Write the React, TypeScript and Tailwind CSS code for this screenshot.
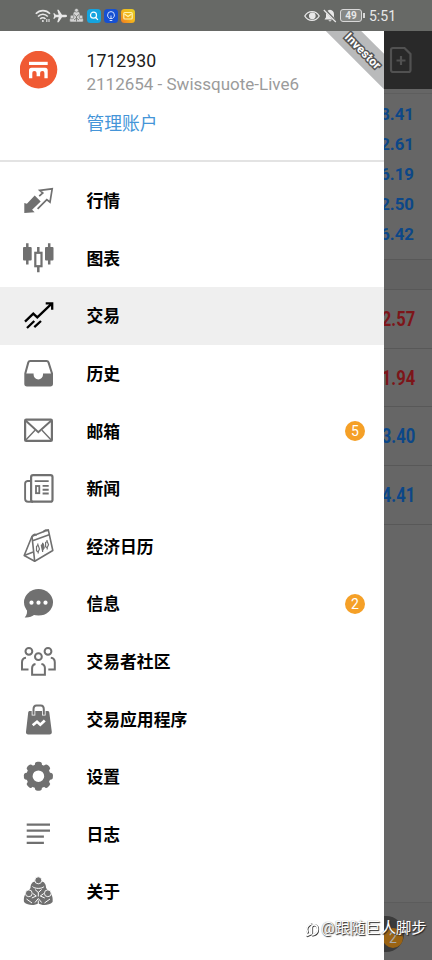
import type { ReactNode } from 'react';

interface MenuItem {
  label: string;
  icon: ReactNode;
  badge?: number;
  active?: boolean;
}

const GRAY = '#707070';

function Icon({ children, color = GRAY }: { children: ReactNode; color?: string }) {
  return (
    <svg width="36" height="36" viewBox="0 0 36 36" fill="none" stroke={color} strokeWidth="2" className="shrink-0 overflow-visible">
      {children}
    </svg>
  );
}

function CommunityLogo({ color }: { color: string }) {
  return (
    <>
      <g fill={color} stroke="none">
        <path d="M10.500 14c0-3.600 2-6.500 4.500-6.500h6.600c2.500 0 4.500 2.900 4.500 6.500l3 4c3 2 4 6 3.500 10-4 4-11 3.500-14.300 1.500C15 31.500 8 32 4 28c-.5-4 .5-8 3.500-10z" />
      </g>
      <g fill={color} stroke="#fff" strokeWidth="0.9">
        <circle cx="18.300" cy="6.300" r="3.500" />
        <circle cx="8.800" cy="19.300" r="3.400" />
        <circle cx="27.800" cy="19.300" r="3.400" />
      </g>
      <g stroke="#fff" strokeWidth="1">
        <path d="M12.500 12.500c2 2.500 9.600 2.500 11.600 0M15 15.500l3.300 3 3.300-3M18.300 18.500v4M12.800 19.500l3.500 2.500-4.500 2M23.800 19.500l-3.500 2.500 4.500 2M6.500 25l5.500 4M30 25l-5.500 4M15 28.500l3.300-4 3.300 4M18.300 26.500v5" />
      </g>
    </>
  );
}

const gearAngles = [0, 45, 90, 135, 180, 225, 270, 315];

const menu: MenuItem[] = [
  {
    label: '行情',
    icon: (
      <Icon>
        <path d="M4.300 19.900v10l10.400-.7-2.600-2.500 8.600-8.200-6-6-7.800 8.200z" fill={GRAY} stroke="none" />
        <path d="M17.600 25.800l9.200-9.200 3.200 2.600 2.200-13.400-12.400 1.600 3 2.600-3.600 3.200" strokeWidth="1.700" />
      </Icon>
    ),
  },
  {
    label: '图表',
    icon: (
      <Icon>
        <path d="M7.300 3.300v21.300M29.200 3.300v21.300M18.300 7v5M18.300 27v5.300" strokeWidth="2.500" />
        <rect x="3" y="6.900" width="8.700" height="13.600" rx="1" fill={GRAY} stroke="none" />
        <rect x="25" y="6.900" width="8.500" height="13.600" rx="1" fill={GRAY} stroke="none" />
        <rect x="15.300" y="12.800" width="6.200" height="13.400" strokeWidth="2.200" />
      </Icon>
    ),
  },
  {
    label: '交易',
    active: true,
    icon: (
      <Icon color="#000">
        <path d="M5 23.700l8.300-8 4 3.700L31.700 5.700M25.700 5.400h6.500v6.300M7 30l7.300-7M14.300 29.200l6.700-6.200" strokeWidth="2.300" />
      </Icon>
    ),
  },
  {
    label: '历史',
    icon: (
      <Icon>
        <path d="M10.200 5h16.400c1 0 1.600.5 1.900 1.400L32 17.500v10.300a1.700 1.700 0 0 1-1.700 1.700H7a1.700 1.700 0 0 1-1.700-1.700V17.500L8.300 6.400C8.600 5.500 9.200 5 10.200 5z" />
        <path d="M5 17.600h8.600v1.200a4.700 4.700 0 0 0 9.400 0v-1.200h9V29.500H5z" fill={GRAY} stroke="none" />
      </Icon>
    ),
  },
  {
    label: '邮箱',
    badge: 5,
    icon: (
      <Icon>
        <rect x="5.100" y="6.700" width="26.800" height="21.200" rx="1" strokeWidth="2.200" />
        <path d="M5.600 7.500l12.700 11.700L31.400 7.500" />
        <path d="M5.600 27.300l9.400-10M31.400 27.300l-9.400-10" strokeWidth="1.400" />
      </Icon>
    ),
  },
  {
    label: '新闻',
    icon: (
      <Icon>
        <rect x="11.100" y="4.100" width="21.400" height="26.600" rx="2" strokeWidth="2.200" />
        <path d="M11 10H7.500C6 10.200 5.100 11.200 5.100 12.700v15c0 2 1.200 3 3 3H13M14.700 10.100h14M22.600 14.900h6.100M22.600 18.700h6.100M22.600 22.500h6.100" strokeWidth="1.900" />
        <rect x="16" y="15" width="3.300" height="7.200" strokeWidth="1.800" />
      </Icon>
    ),
  },
  {
    label: '经济日历',
    icon: (
      <Icon>
        <g strokeWidth="1.600" strokeLinejoin="round">
          <path d="M12 8.300L28.300 1.800 32.800 22.500 14.700 33.300 4.200 27.500z" />
          <path d="M12 8.300l2.700 25M12.600 12.800l17.200-6.400M4.200 27.500l9-3.500" />
          <path d="M12.600 8.500c0-2 3.200-3.200 3.700-.8M23.600 4.200c0-2 3.200-3.200 3.700-.8" />
          <g strokeWidth="1.200">
            <path d="M16.500 18.500l1.600-1.400 1.400 4-1.400 2.900-1.600-1.200zM25.600 14.500l1.600-1 1.300 3.200-1.400 3-1.500-1zM17.800 15.500v1.800M18.200 23.500v2M27 12v1.600M27.200 19.400v2M22.600 14.800v9.200" />
            <path d="M21.300 17.200l2-1.200.9 4-1.800 2.300z" fill={GRAY} />
          </g>
        </g>
      </Icon>
    ),
  },
  {
    label: '信息',
    badge: 2,
    icon: (
      <Icon>
        <g fill={GRAY} stroke="none">
          <ellipse cx="18.500" cy="16.300" rx="14.500" ry="13.200" />
          <path d="M6.500 22c1.200 4 .5 7-1.800 9.500 4 .3 7.300-.7 10-3z" />
        </g>
        <g fill="#fff" stroke="none">
          <circle cx="11.500" cy="16.700" r="2.100" />
          <circle cx="18.500" cy="16.700" r="2.100" />
          <circle cx="25.500" cy="16.700" r="2.100" />
        </g>
      </Icon>
    ),
  },
  {
    label: '交易者社区',
    icon: (
      <Icon>
        <circle cx="8.900" cy="7.300" r="3.400" />
        <circle cx="28" cy="7.300" r="3.400" />
        <circle cx="18.400" cy="12.700" r="3.400" />
        <path d="M6 13.700c-2.600.3-4 1.900-4 4.600v7.300h6.500M30.800 13.700c2.600.3 4 1.900 4 4.600v7.300h-6.500" />
        <path d="M15.500 19.900c-2.400.4-3.400 1.900-3.400 4.100v6.800h12.800V24c0-2.200-1.200-3.700-3.500-4.100" />
      </Icon>
    ),
  },
  {
    label: '交易应用程序',
    icon: (
      <Icon>
        <path d="M9.800 10.100h17.800c1 0 1.500.5 1.700 1.500l2.500 19.200c.2 1.700-.7 2.700-2.300 2.700H8.300c-1.600 0-2.500-1-2.300-2.700l2.200-19.200c.1-1 .7-1.500 1.600-1.500z" fill={GRAY} stroke="none" />
        <path d="M13.500 14.500V8.300c0-2.500 1-3.900 3-3.900h4.300c2 0 3 1.400 3 3.900v6.200" stroke="#fff" strokeWidth="3.600" />
        <path d="M13.500 13.800V8.300c0-2.500 1-3.900 3-3.900h4.300c2 0 3 1.400 3 3.900v5.500" />
        <path d="M12.700 24.300l4.300-3.500 3.300 2.900 4.500-4.200" stroke="#fff" strokeWidth="2.700" />
      </Icon>
    ),
  },
  {
    label: '设置',
    icon: (
      <Icon>
        <circle cx="18.400" cy="17.200" r="8.900" strokeWidth="6.200" />
        {gearAngles.map((a) => (
          <rect key={a} x="14.900" y="2.700" width="7" height="6" rx="2.600" fill={GRAY} stroke="none" transform={`rotate(${a} 18.400 17.200)`} />
        ))}
      </Icon>
    ),
  },
  {
    label: '日志',
    icon: (
      <Icon>
        <path d="M6.700 8.600H30M6.700 14.600H30M6.700 20.700h17.200M6.700 26.900h17.200" strokeWidth="2.200" />
      </Icon>
    ),
  },
  {
    label: '关于',
    icon: (
      <Icon>
        <CommunityLogo color={GRAY} />
      </Icon>
    ),
  },
];

const summary = ['8.41', '2.61', '6.19', '2.50', '6.42'];

const positions = [
  { value: '2.57', className: 'text-[#7d1519]' },
  { value: '1.94', className: 'text-[#7d1519]' },
  { value: '3.40', className: 'text-[#0c4788]' },
  { value: '4.41', className: 'text-[#0c4788]' },
];

function StatusBar() {
  return (
    <div className="flex h-[31px] shrink-0 items-center justify-between bg-[#676966] pl-[35px] pr-[36px] text-[#e8e8e8]">
      <div className="flex items-center gap-[2px]">
        <svg width="16" height="14" viewBox="0 0 16 14" fill="none" stroke="currentColor" strokeWidth="1.600">
          <path d="M.8 4.800c4-4.300 10.200-4.300 14.200 0M3 7.500c2.800-3 7-3 9.800 0M5.200 10c1.500-1.600 3.800-1.600 5.300 0" />
          <circle cx="7.900" cy="12" r="1" fill="currentColor" stroke="none" />
          <path d="M11.800 10v3M14 10v3" strokeWidth="1.100" />
        </svg>
        <svg width="14" height="14" viewBox="0 0 14 14" fill="currentColor">
          <path d="M14 7c0-.8-.7-1.200-1.500-1.200H9L5.700.8H4.200l1.500 5H2.800L1.500 4.300H.3L1.200 7l-.9 2.700h1.200l1.300-1.500h2.900l-1.500 5h1.500l3.300-5h3.500c.8 0 1.500-.4 1.500-1.200z" />
        </svg>
        {/* group of people, the notification version of the logo */}
        <svg width="15" height="15" viewBox="0 0 15 15" fill="#d4d4d4" stroke="#676966" strokeWidth="0.600" className="mr-px">
          <path d="M4 7c0-2.500 1.200-4 3.500-4S11 4.500 11 7l2.500 2.500c1 1.500 1 3 .5 4.500H1c-.5-1.500-.5-3 .5-4.500z" />
          <circle cx="7.500" cy="2.300" r="1.900" />
          <circle cx="3" cy="9" r="1.900" />
          <circle cx="12" cy="9" r="1.900" />
          <path d="M5 6.500l2.500 2 2.500-2M7.500 8.500v5M5 12l2.500-2L10 12" fill="none" strokeWidth="0.800" />
        </svg>
        <div className="flex gap-[3px]">
          <svg width="14" height="14" viewBox="0 0 14 14" fill="none" stroke="#fff" strokeWidth="1.200">
            <rect width="14" height="14" rx="3.500" fill="#15a4df" stroke="none" />
            <circle cx="6.500" cy="6.200" r="3" />
            <path d="M8.700 8.500l2.200 2.300" />
          </svg>
          <svg width="14" height="14" viewBox="0 0 14 14" fill="none" stroke="#cfe0ff" strokeWidth="1">
            <rect width="14" height="14" rx="3.500" fill="#1650d2" stroke="none" />
            <path d="M5.600 9.500C4.200 8.500 3.600 7.500 3.600 6a3.400 3.400 0 0 1 6.800 0c0 1.500-.6 2.500-2 3.500zM5.700 11.500h2.600M7 9V6.500" />
          </svg>
          <svg width="14" height="14" viewBox="0 0 14 14" fill="none" stroke="#fff3b0" strokeWidth="1.200">
            <defs>
              <linearGradient id="mail" x1="0" y1="1" x2="1" y2="0">
                <stop offset="0" stopColor="#f07a22" />
                <stop offset="0.500" stopColor="#f3b51c" />
                <stop offset="1" stopColor="#e3cf25" />
              </linearGradient>
            </defs>
            <rect width="14" height="14" rx="3.500" fill="url(#mail)" stroke="none" />
            <rect x="2.800" y="3.500" width="8.400" height="6.500" rx="1" />
            <path d="M3.500 5L7 7.500 10.500 5" />
          </svg>
        </div>
      </div>
      <div className="flex items-center">
        <svg width="16" height="12" viewBox="0 0 16 12" fill="none" stroke="currentColor" strokeWidth="1.300">
          <path d="M.8 6C4 .2 12 .2 15.200 6 12 11.800 4 11.800.8 6z" />
          <circle cx="8.300" cy="5.800" r="2.700" fill="currentColor" />
        </svg>
        <svg width="14" height="14" viewBox="0 0 14 14" className="ml-[3px]">
          <path d="M7 .8c2.600.3 4 2 4 4.500v3l1.500 2.200h-11L3 8.300v-3C3 2.800 4.400 1.100 7 .8zM5.500 11.300h3c-.2 1.500-2.800 1.500-3 0z" fill="currentColor" />
          <path d="M1.500.5l12 12.500" stroke="#676966" strokeWidth="2.500" />
          <path d="M.8 1l12 12" stroke="currentColor" strokeWidth="1.200" />
        </svg>
        <div className="ml-[3px] flex h-[13px] w-[22px] items-center justify-center rounded-[3px] border border-[#d8d8d8] bg-[#858784] text-[10px] font-bold leading-none">49</div>
        <span className="ml-px h-[5px] w-[2px] bg-[#d8d8d8]" />
        <span className="ml-[4px] pt-px text-[14px] leading-none">5:51</span>
      </div>
    </div>
  );
}

function AccountHeader() {
  return (
    <div className="flex h-[131px] shrink-0 border-b-2 border-[#e3e3e3] pl-[20px] pt-[20px]">
      <svg width="38" height="38" viewBox="0 0 38 38" className="shrink-0">
        <circle cx="18.500" cy="18.600" r="18.800" fill="#f05a33" />
        <path d="M9 10.800h18.700V14H9z" fill="#fff" />
        <path d="M11.500 16.800h13.700c1.700 0 2.500.9 2.500 2.500v7.900h-3.300v-4.700c0-1.700-.6-2.500-2-2.500-1.500 0-2.300.8-2.300 2.500v2.800h-3.500v-2.800c0-1.700-.8-2.500-2.300-2.500-1.400 0-2 .8-2 2.500v4.700H9v-7.900c0-1.600.8-2.500 2.500-2.500z" fill="#fff" />
      </svg>
      <div className="ml-[28.500px] flex flex-col whitespace-nowrap">
        <span className="-mt-px text-[17.700px] leading-[23px] text-[#1c1c1c]">1712930</span>
        <span className="text-[17px] leading-[23px] text-[#9b9b9b]">2112654 - Swissquote-Live6</span>
        <span className="mt-[15px] text-[17.800px] leading-[26px] text-[#4595d8]">管理账户</span>
      </div>
    </div>
  );
}

function Drawer() {
  return (
    <aside className="relative flex w-[384px] shrink-0 flex-col overflow-hidden bg-white">
      <AccountHeader />
      <nav className="pt-[10px]">
        {menu.map((item) => (
          <div key={item.label} className={`flex h-[57.600px] items-center pl-[20px] pr-[19px] ${item.active ? 'bg-[#efefef]' : ''}`}>
            {item.icon}
            <span className="ml-[30.500px] flex-1 pt-[2px] text-[16.800px] font-bold text-black">{item.label}</span>
            {item.badge && (
              <span className="flex h-[20px] w-[20px] items-center justify-center rounded-full bg-[#f5a027] text-[14px] leading-none text-white">{item.badge}</span>
            )}
          </div>
        ))}
      </nav>
      {/* corner ribbon */}
      <div className="absolute left-[304px] top-[8px] flex h-[25px] w-[120px] rotate-45 items-center justify-center bg-[#b9babb]">
        <span className="-ml-[2px] text-[12px] font-bold tracking-[0.2px] text-white [paint-order:stroke] [-webkit-text-stroke:3px_#555]">Investor</span>
      </div>
    </aside>
  );
}

function TradePage() {
  return (
    <div className="flex flex-1 flex-col overflow-hidden bg-[#666]">
      <div className="flex h-[58px] shrink-0 items-center bg-[#292929] pl-[5px]">
        <svg width="24" height="28" viewBox="0 0 24 28" fill="none" stroke="#515151" strokeWidth="2.200">
          <path d="M4 2h11.500L21.500 8v16a2 2 0 0 1-2 2H4a2 2 0 0 1-2-2V4a2 2 0 0 1 2-2zM12 10v9M7.500 14.500h9" />
        </svg>
      </div>
      <div className="h-[5px] shrink-0 border-b border-[#5e5e5e]" />
      <div className="flex h-[166px] shrink-0 flex-col border-b border-[#585858] pt-[6px]">
        {summary.map((value) => (
          <div key={value} className="flex h-[30px] items-center justify-end pr-[18px] text-[16.800px] font-bold text-[#0c4788]">{value}</div>
        ))}
      </div>
      <div className="h-[30px] shrink-0 border-b border-[#585858] bg-[#626262]" />
      {positions.map((p) => (
        <div key={p.value} className="flex h-[58.700px] shrink-0 items-center justify-end border-b border-[#585858] pr-[17px]">
          <span className={`origin-right scale-x-[0.83] text-[20px] font-bold ${p.className}`}>{p.value}</span>
        </div>
      ))}
      <div className="mt-auto h-[58px] shrink-0 border-t border-[#5c5c5c] bg-[#636363]">
        <div className="relative -ml-[16px] mt-[13px] h-[36px] w-[36px] rounded-full bg-[#3b3b3b]">
          <span className="absolute left-[15px] top-[12px] flex h-[20px] w-[20px] items-center justify-center rounded-full bg-[#9a6313] text-[14px] text-[#a9a9a9]">2</span>
        </div>
      </div>
    </div>
  );
}

export default function App() {
  return (
    <div className="relative flex h-[960px] w-[432px] flex-col overflow-hidden bg-white font-[Roboto,'Noto_Sans_CJK_SC',sans-serif]">
      <StatusBar />
      <div className="flex min-h-0 flex-1">
        <Drawer />
        <TradePage />
      </div>
      {/* author watermark */}
      <div className="absolute left-[305px] top-[916px] flex items-center whitespace-nowrap text-[15.300px] leading-[24px] text-white [text-shadow:1px_1px_1px_#222,0_0_1px_#777]">
        <svg width="16" height="17" viewBox="0 0 16 17" fill="none" strokeLinecap="round" className="mt-[3px]">
          <path d="M6.500 3.500C2 5 1.500 9 3 11.500M8 14.500c5-1 6-5.500 4.500-8.500-1.500-2.500-5-2-5.500.5M7 6.500v6.500L2.500 15" stroke="#333" strokeWidth="2.200" />
          <path d="M6 3C1.500 4.500 1 8.500 2.500 11M7.500 14c5-1 6-5.500 4.500-8.500-1.500-2.500-5-2-5.500.5M6.500 6v6.500L2 14.500" stroke="#fff" strokeWidth="1.700" />
        </svg>
        <span>@跟随巨人脚步</span>
      </div>
    </div>
  );
}
